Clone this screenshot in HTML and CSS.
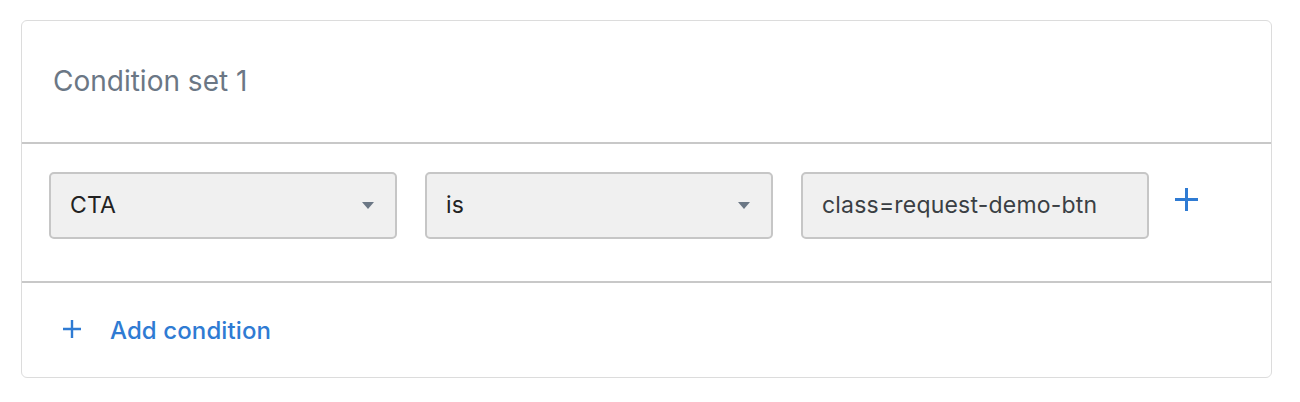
FILE: index.html
```html
<!DOCTYPE html>
<html>
<head>
<meta charset="utf-8">
<link rel="stylesheet" href="styles.css">
</head>
<body>
<div class="page">
  <section class="card">
    <header class="card-head">
      <h2 class="title">Condition set 1</h2>
    </header>
    <div class="row">
      <div class="field select"><span>CTA</span><i class="caret"></i></div>
      <div class="field select"><span>is</span><i class="caret"></i></div>
      <div class="field input"><span>class=request-demo-btn</span></div>
      <button class="icon-btn" aria-label="Add">
        <svg width="23" height="23" viewBox="0 0 23 23"><path d="M11.5 0V23M0 11.5H23" stroke="#2f7bd3" stroke-width="3"/></svg>
      </button>
    </div>
    <footer class="card-foot">
      <button class="add-link">
        <svg width="18" height="18" viewBox="0 0 18 18"><path d="M9 0V18M0 9H18" stroke="#2f7bd3" stroke-width="2.4"/></svg>
        <span>Add condition</span>
      </button>
    </footer>
  </section>
</div>
</body>
</html>
```
FILE: styles.css
```css
html, body { margin: 0; padding: 0; background: #fff; }
body { font-family: "Inter", "Liberation Sans", sans-serif; }
.page { padding: 20px 28px 24px 21px; }
.card {
  border: 1px solid #dcdcdc;
  border-radius: 6px;
  background: #fff;
}
.card-head {
  height: 121px;
  display: flex;
  align-items: center;
  padding-left: 31px;
  border-bottom: 2px solid #c8c8c8;
}
.title {
  margin: 0;
  font-size: 28px;
  font-weight: 400;
  color: #6b7785;
  position: relative;
  top: -1px;
}
.row {
  display: flex;
  align-items: center;
  gap: 28px;
  padding: 28px 0 42px 27px;
  border-bottom: 2px solid #c8c8c8;
}
.field {
  box-sizing: border-box;
  width: 348px;
  height: 67px;
  background: #f0f0f0;
  border: 2px solid #c6c6c6;
  border-radius: 5px;
  display: flex;
  align-items: center;
  padding: 0 20px 0 19px;
  font-size: 23px;
  letter-spacing: 0.2px;
  color: #222;
}
.field span { flex: 1; position: relative; top: -1px; }
.input { color: #3a3f44; }
.caret {
  width: 0; height: 0;
  border-left: 6px solid transparent;
  border-right: 6px solid transparent;
  border-top: 7px solid #6b7785;
  margin-right: 1px;
}
.icon-btn {
  border: 0; background: none; padding: 0; margin-left: -2px;
  display: flex; position: relative; top: -6px;
}
.card-foot {
  height: 94px;
  display: flex;
  align-items: center;
  padding-left: 41px;
}
.add-link {
  border: 0; background: none; padding: 0;
  display: flex; align-items: center; gap: 29px;
  font-family: inherit;
  font-size: 24px;
  font-weight: 500;
  color: #2f7bd3;
  letter-spacing: 0.1px;
}
.add-link svg { position: relative; top: -1px; }
```
